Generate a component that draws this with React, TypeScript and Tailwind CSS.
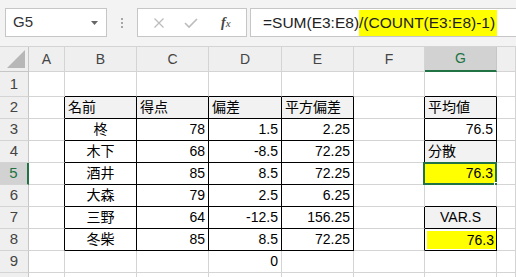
import React from 'react';

type Cell = {
  text?: string;
  align?: 'l' | 'c' | 'r';
  fill?: 'gray' | 'yellow' | 'yellowInset';
  selected?: boolean;
};

const colLetters = ['A', 'B', 'C', 'D', 'E', 'F', 'G', ''];

// row -> col index (1 = A ... 8 = H)
const data: Record<number, Record<number, Cell>> = {
  2: {
    2: { text: '名前', align: 'l', fill: 'gray' },
    3: { text: '得点', align: 'l', fill: 'gray' },
    4: { text: '偏差', align: 'l', fill: 'gray' },
    5: { text: '平方偏差', align: 'l', fill: 'gray' },
    7: { text: '平均値', align: 'l', fill: 'gray' },
  },
  3: { 2: { text: '柊', align: 'c' }, 3: { text: '78' }, 4: { text: '1.5' }, 5: { text: '2.25' }, 7: { text: '76.5' } },
  4: {
    2: { text: '木下', align: 'c' },
    3: { text: '68' },
    4: { text: '-8.5' },
    5: { text: '72.25' },
    7: { text: '分散', align: 'l', fill: 'gray' },
  },
  5: {
    2: { text: '酒井', align: 'c' },
    3: { text: '85' },
    4: { text: '8.5' },
    5: { text: '72.25' },
    7: { text: '76.3', fill: 'yellow', selected: true },
  },
  6: { 2: { text: '大森', align: 'c' }, 3: { text: '79' }, 4: { text: '2.5' }, 5: { text: '6.25' } },
  7: {
    2: { text: '三野', align: 'c' },
    3: { text: '64' },
    4: { text: '-12.5' },
    5: { text: '156.25' },
    7: { text: 'VAR.S', align: 'c', fill: 'gray' },
  },
  8: {
    2: { text: '冬柴', align: 'c' },
    3: { text: '85' },
    4: { text: '8.5' },
    5: { text: '72.25' },
    7: { text: '76.3', fill: 'yellowInset' },
  },
  9: { 4: { text: '0' } },
};

const boxed = (r: number, c: number) => {
  if (r >= 2 && r <= 8 && c >= 2 && c <= 5) return true;
  if (c === 7 && [2, 3, 4, 5, 7, 8].includes(r)) return true;
  return false;
};

const font = { fontFamily: '"Liberation Sans", "Noto Sans CJK JP", sans-serif' };

const FormulaBar = () => (
  <div className="h-[47px] bg-[#f3f3f3] border-b border-[#d4d4d4] flex items-start pt-2 pl-[5px]">
    <div className="w-[102px] h-[29px] bg-white border border-[#c6c6c6] flex items-center justify-between pl-[7px] pr-[8px]">
      <span className="text-[15px] text-[#333]">G5</span>
      <svg width="7" height="4" viewBox="0 0 7 4">
        <polygon points="0,0 7,0 3.5,4" fill="#666" />
      </svg>
    </div>
    <div className="w-[30px] h-[29px] flex flex-col items-center justify-center gap-[2px]">
      <span className="w-[2px] h-[2px] bg-[#a6a6a6]" />
      <span className="w-[2px] h-[2px] bg-[#a6a6a6]" />
      <span className="w-[2px] h-[2px] bg-[#a6a6a6]" />
    </div>
    <div className="w-[110px] h-[29px] bg-white border border-[#c6c6c6] flex items-center pl-[15px] gap-[19px]">
      <svg width="12" height="12" viewBox="0 0 12 12">
        <path d="M1.5 1.5 L10.5 10.5 M10.5 1.5 L1.5 10.5" stroke="#bcbcbc" strokeWidth="1.3" fill="none" />
      </svg>
      <svg width="14" height="12" viewBox="0 0 14 12">
        <path d="M1 6 L5 10 L13 2" stroke="#bcbcbc" strokeWidth="1.6" fill="none" />
      </svg>
      <span className="ml-[4px] text-[14px] italic text-[#444]" style={{ fontFamily: '"Liberation Serif", serif' }}>
        <span className="font-bold">f</span>
        <span className="text-[11px]">x</span>
      </span>
    </div>
    <div className="ml-[3px] flex-1 h-[29px] bg-white border border-[#c6c6c6] border-r-0 flex items-center pl-[12px] text-[15.5px] text-[#222]">
      <span>=SUM(E3:E8)</span>
      <span className="bg-[#ffff00] h-[26px] flex items-center pr-[2px]">/(COUNT(E3:E8)-1)</span>
    </div>
  </div>
);

const ColumnHeaders = () => (
  <>
    <div className="bg-[#efefef] border-r border-b border-[#c6c6c6] flex items-end justify-end p-[3px]">
      <svg width="18" height="18" viewBox="0 0 18 18">
        <polygon points="18,0 18,18 0,18" fill="#b7b7b7" />
      </svg>
    </div>
    {colLetters.map((l, i) =>
      l === 'G' ? (
        <div
          key={i}
          className="bg-[#d2d2d2] border-r border-r-[#c6c6c6] border-b-2 border-b-[#217346] flex items-center justify-center text-[14px] text-[#217346]"
        >
          {l}
        </div>
      ) : (
        <div
          key={i}
          className="bg-[#efefef] border-r border-b border-[#d4d4d4] flex items-center justify-center text-[14px] text-[#444]"
        >
          {l}
        </div>
      )
    )}
  </>
);

const DataCell = ({ r, c }: { r: number; c: number }) => {
  const cell = data[r]?.[c] ?? {};
  const rightBlack = boxed(r, c) || boxed(r, c + 1);
  const bottomBlack = boxed(r, c) || boxed(r + 1, c);
  const rb = rightBlack ? 'border-r-black' : 'border-r-[#d4d4d4]';
  const bb = bottomBlack ? 'border-b-black' : 'border-b-[#d4d4d4]';
  const align =
    cell.align === 'l' ? 'justify-start pl-[3px]' : cell.align === 'c' ? 'justify-center' : 'justify-end pr-[3px]';
  const fill =
    cell.fill === 'gray' ? 'bg-[#f2f2f2]' : cell.fill === 'yellow' ? 'bg-[#ffff00]' : 'bg-white';

  if (cell.fill === 'yellowInset') {
    return (
      <div className={`border-r border-b ${rb} ${bb} bg-white p-[2px] pr-0 pb-[1px]`}>
        <div className="w-full h-full bg-[#ffff00] flex items-center justify-end pr-[2px] text-[14px] text-black">
          {cell.text}
        </div>
      </div>
    );
  }

  return (
    <div className={`relative border-r border-b ${rb} ${bb} ${fill} flex items-center ${align} text-[14px] text-black`}>
      {cell.text}
      {cell.selected && (
        <>
          <div className="absolute -left-[2px] -top-[1px] -right-[1px] -bottom-[1px] border-2 border-[#217346]" />
          <div className="absolute -right-[4px] -bottom-[4px] w-[6px] h-[6px] bg-[#217346] border border-white" />
        </>
      )}
    </div>
  );
};

export default function App() {
  const rows = [1, 2, 3, 4, 5, 6, 7, 8, 9, 10];
  return (
    <div className="w-[516px] h-[277px] overflow-hidden bg-white" style={font}>
      <FormulaBar />
      <div className="grid grid-cols-[29px_36px_72px_72px_73px_72px_71px_72px_1fr] grid-rows-[25px_25px_22px_22px_22px_22px_22px_22px_22px_22px_22px]">
        <ColumnHeaders />
        {rows.map((r) => (
          <React.Fragment key={r}>
            {r === 5 ? (
              <div className="bg-[#d2d2d2] border-r-2 border-r-[#217346] border-b border-b-[#d4d4d4] flex items-center justify-center text-[15px] text-[#217346]">
                {r}
              </div>
            ) : (
              <div className="bg-[#efefef] border-r border-r-[#c6c6c6] border-b border-b-[#d4d4d4] flex items-center justify-center text-[15px] text-[#444]">
                {r < 10 ? r : ''}
              </div>
            )}
            {[1, 2, 3, 4, 5, 6, 7, 8].map((c) => (
              <DataCell key={c} r={r} c={c} />
            ))}
          </React.Fragment>
        ))}
      </div>
    </div>
  );
}
